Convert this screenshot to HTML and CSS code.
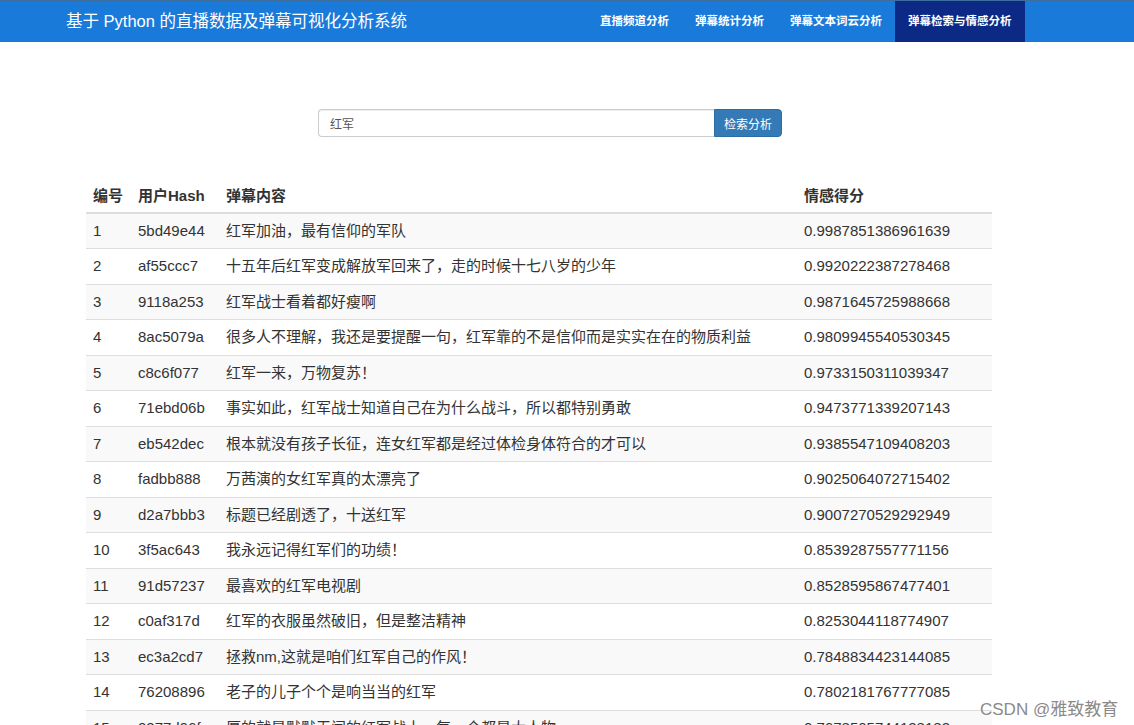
FILE: index.html
```html
<!DOCTYPE html>
<html lang="zh">
<head>
<meta charset="utf-8">
<title>弹幕检索与情感分析</title>
<link rel="stylesheet" href="styles.css">
</head>
<body>
<header class="navbar">
  <div class="brand">基于 Python 的直播数据及弹幕可视化分析系统</div>
  <nav class="nav">
    <a class="nav-item">直播频道分析</a>
    <a class="nav-item">弹幕统计分析</a>
    <a class="nav-item">弹幕文本词云分析</a>
    <a class="nav-item active">弹幕检索与情感分析</a>
  </nav>
</header>
<main class="main">
  <form class="search">
    <input class="search-input" type="text" value="红军">
    <button class="search-btn" type="button">检索分析</button>
  </form>
  <table class="table">
    <thead>
      <tr><th class="c1">编号</th><th class="c2">用户Hash</th><th class="c3">弹幕内容</th><th class="c4">情感得分</th></tr>
    </thead>
    <tbody>
      <tr><td>1</td><td>5bd49e44</td><td>红军加油，最有信仰的军队</td><td>0.9987851386961639</td></tr>
      <tr><td>2</td><td>af55ccc7</td><td>十五年后红军变成解放军回来了，走的时候十七八岁的少年</td><td>0.9920222387278468</td></tr>
      <tr><td>3</td><td>9118a253</td><td>红军战士看着都好瘦啊</td><td>0.9871645725988668</td></tr>
      <tr><td>4</td><td>8ac5079a</td><td>很多人不理解，我还是要提醒一句，红军靠的不是信仰而是实实在在的物质利益</td><td>0.9809945540530345</td></tr>
      <tr><td>5</td><td>c8c6f077</td><td>红军一来，万物复苏！</td><td>0.9733150311039347</td></tr>
      <tr><td>6</td><td>71ebd06b</td><td>事实如此，红军战士知道自己在为什么战斗，所以都特别勇敢</td><td>0.9473771339207143</td></tr>
      <tr><td>7</td><td>eb542dec</td><td>根本就没有孩子长征，连女红军都是经过体检身体符合的才可以</td><td>0.9385547109408203</td></tr>
      <tr><td>8</td><td>fadbb888</td><td>万茜演的女红军真的太漂亮了</td><td>0.9025064072715402</td></tr>
      <tr><td>9</td><td>d2a7bbb3</td><td>标题已经剧透了，十送红军</td><td>0.9007270529292949</td></tr>
      <tr><td>10</td><td>3f5ac643</td><td>我永远记得红军们的功绩！</td><td>0.8539287557771156</td></tr>
      <tr><td>11</td><td>91d57237</td><td>最喜欢的红军电视剧</td><td>0.8528595867477401</td></tr>
      <tr><td>12</td><td>c0af317d</td><td>红军的衣服虽然破旧，但是整洁精神</td><td>0.8253044118774907</td></tr>
      <tr><td>13</td><td>ec3a2cd7</td><td>拯救nm,这就是咱们红军自己的作风！</td><td>0.7848834423144085</td></tr>
      <tr><td>14</td><td>76208896</td><td>老子的儿子个个是响当当的红军</td><td>0.7802181767777085</td></tr>
      <tr><td>15</td><td>0377d96f</td><td>厚的就是默默无闻的红军战士，每一个都是大人物</td><td>0.7678505744128183</td></tr>
    </tbody>
  </table>
</main>
<div class="watermark">CSDN @雅致教育</div>
</body>
</html>
```

FILE: styles.css
```css
* { box-sizing: border-box; }
html, body { margin: 0; padding: 0; background: #fff; }
body {
  font-family: "Liberation Sans", "Noto Sans CJK SC", sans-serif;
  color: #333;
  height: 725px;
  overflow: hidden;
}
.navbar {
  height: 42px;
  background: #1a7ad9;
  border-top: 1px solid #3d6f9e;
  display: flex;
  align-items: stretch;
  padding-left: 66px;
}
.brand {
  color: #fff;
  font-size: 16.5px;
  line-height: 41px;
  flex: 0 0 auto;
}
.nav {
  display: flex;
  margin-left: 180px;
}
.nav-item {
  color: #fff;
  font-size: 11.5px;
  font-weight: bold;
  line-height: 41px;
  padding: 0 13px;
  white-space: nowrap;
}
.nav-item.active {
  background: #0c2a85;
}
.main {
  padding-top: 67px;
}
.search {
  display: flex;
  margin: 0 0 0 318px;
  width: 464px;
  height: 28px;
}
.search-input {
  flex: 1;
  height: 28px;
  border: 1px solid #ccc;
  border-right: none;
  border-radius: 4px 0 0 4px;
  box-shadow: inset 0 1px 1px rgba(0,0,0,.075);
  padding: 0 11px;
  font-family: "Liberation Sans", "Noto Sans CJK SC", sans-serif;
  font-size: 12px;
  color: #555;
  outline: none;
}
.search-btn {
  height: 28px;
  width: 68px;
  border: 1px solid #2e6da4;
  background: #337ab7;
  color: #fff;
  border-radius: 0 4px 4px 0;
  font-family: "Liberation Sans", "Noto Sans CJK SC", sans-serif;
  font-size: 12px;
  padding: 0;
}
.table {
  margin: 41px 0 0 86px;
  width: 906px;
  border-collapse: collapse;
  border-spacing: 0;
  font-size: 15px;
}
.table th, .table td {
  padding: 8px 7px;
  line-height: 18.5px;
  text-align: left;
  vertical-align: top;
  white-space: nowrap;
}
.table th {
  font-weight: bold;
  border-bottom: 2px solid #ddd;
  padding-top: 9px;
  padding-bottom: 6px;
}
.table td { border-top: 1px solid #ddd; }
.table tbody tr:nth-child(odd) { background: #f9f9f9; }
.c1 { width: 45px; }
.c2 { width: 88px; }
.c3 { width: 578px; }
.c4 { width: 195px; }
.watermark {
  position: absolute;
  left: 980px;
  top: 695px;
  font-size: 17px;
  color: #8a8a8a;
  text-shadow: 0 0 2px #fff;
  white-space: nowrap;
}
```
